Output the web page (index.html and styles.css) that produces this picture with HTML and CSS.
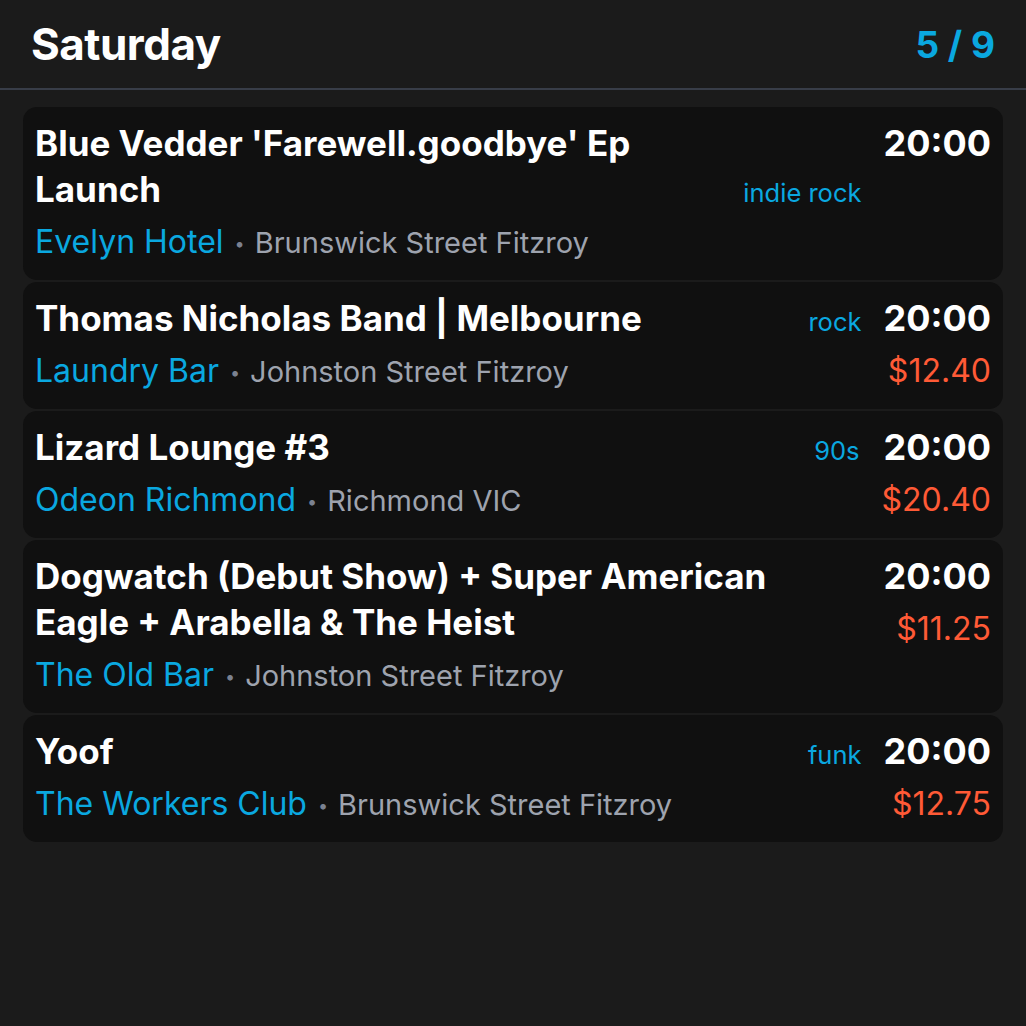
FILE: index.html
```html
<!DOCTYPE html>
<html lang="en">
<head>
<meta charset="utf-8">
<title>Saturday</title>
<link rel="stylesheet" href="styles.css">
</head>
<body>
<header class="header">
  <h1 class="day">Saturday</h1>
  <div class="count">5 / 9</div>
</header>
<main class="list">
  <article class="card">
    <div class="main">
      <div class="top">
        <h2 class="title">Blue Vedder 'Farewell.goodbye' Ep Launch</h2>
        <span class="genre">indie rock</span>
      </div>
      <div class="venue"><span class="venue-name">Evelyn Hotel</span><span class="dot">•</span><span class="addr">Brunswick Street Fitzroy</span></div>
    </div>
    <div class="side">
      <div class="time">20:00</div>
    </div>
  </article>
  <article class="card">
    <div class="main">
      <div class="top">
        <h2 class="title">Thomas Nicholas Band | Melbourne</h2>
        <span class="genre">rock</span>
      </div>
      <div class="venue"><span class="venue-name">Laundry Bar</span><span class="dot">•</span><span class="addr">Johnston Street Fitzroy</span></div>
    </div>
    <div class="side">
      <div class="time">20:00</div>
      <div class="price">$12.40</div>
    </div>
  </article>
  <article class="card">
    <div class="main">
      <div class="top">
        <h2 class="title">Lizard Lounge #3</h2>
        <span class="genre">90s</span>
      </div>
      <div class="venue"><span class="venue-name">Odeon Richmond</span><span class="dot">•</span><span class="addr">Richmond VIC</span></div>
    </div>
    <div class="side">
      <div class="time">20:00</div>
      <div class="price">$20.40</div>
    </div>
  </article>
  <article class="card">
    <div class="main">
      <div class="top">
        <h2 class="title">Dogwatch (Debut Show) + Super American Eagle + Arabella &amp; The Heist</h2>
      </div>
      <div class="venue"><span class="venue-name">The Old Bar</span><span class="dot">•</span><span class="addr">Johnston Street Fitzroy</span></div>
    </div>
    <div class="side">
      <div class="time">20:00</div>
      <div class="price">$11.25</div>
    </div>
  </article>
  <article class="card">
    <div class="main">
      <div class="top">
        <h2 class="title">Yoof</h2>
        <span class="genre">funk</span>
      </div>
      <div class="venue"><span class="venue-name">The Workers Club</span><span class="dot">•</span><span class="addr">Brunswick Street Fitzroy</span></div>
    </div>
    <div class="side">
      <div class="time">20:00</div>
      <div class="price">$12.75</div>
    </div>
  </article>
</main>
</body>
</html>
```

FILE: styles.css
```css
* { box-sizing: border-box; }
html, body {
  margin: 0;
  padding: 0;
  background: #1b1b1b;
  font-family: Inter, "Noto Sans", "Liberation Sans", sans-serif;
  color: #ffffff;
}
.header {
  height: 90px;
  display: flex;
  align-items: center;
  justify-content: space-between;
  padding: 0 31px 0 31px;
  border-bottom: 2px solid #383d48;
}
.day {
  margin: 0;
  font-size: 44px;
  font-weight: 700;
  letter-spacing: -0.5px;
  color: #ffffff;
}
.count {
  font-size: 37px;
  font-weight: 700;
  color: #0aa8e0;
}
.list {
  padding: 17px 23px;
  display: flex;
  flex-direction: column;
  gap: 2px;
}
.card {
  background: #101010;
  border-radius: 14px;
  padding: 13px 12px 14px 12px;
  display: flex;
  align-items: flex-start;
}
.main {
  flex: 1;
  min-width: 0;
}
.top {
  display: flex;
  align-items: last baseline;
}
.title {
  flex: 1;
  margin: 0;
  padding-right: 24px;
  font-size: 35px;
  line-height: 46px;
  font-weight: 700;
  color: #ffffff;
}
.genre {
  font-size: 25.5px;
  color: #0aa8e0;
  margin: 0 22px 0 0;
  white-space: nowrap;
}
.venue {
  margin-top: 6px;
  height: 48px;
  display: flex;
  align-items: baseline;
  white-space: nowrap;
}
.venue > span {
  line-height: 48px;
}
.venue-name {
  font-size: 32px;
  color: #0aa8e0;
}
.dot {
  font-size: 18px;
  color: #7b8190;
  margin: 0 10px 0 11px;
  position: relative;
  top: -3px;
}
.addr {
  font-size: 29px;
  color: #9ea3ae;
}
.side {
  text-align: right;
}
.time {
  font-size: 36px;
  line-height: 46px;
  font-weight: 700;
  color: #ffffff;
}
.price {
  margin-top: 6px;
  font-size: 32px;
  line-height: 48px;
  color: #ff5a36;
}
```
